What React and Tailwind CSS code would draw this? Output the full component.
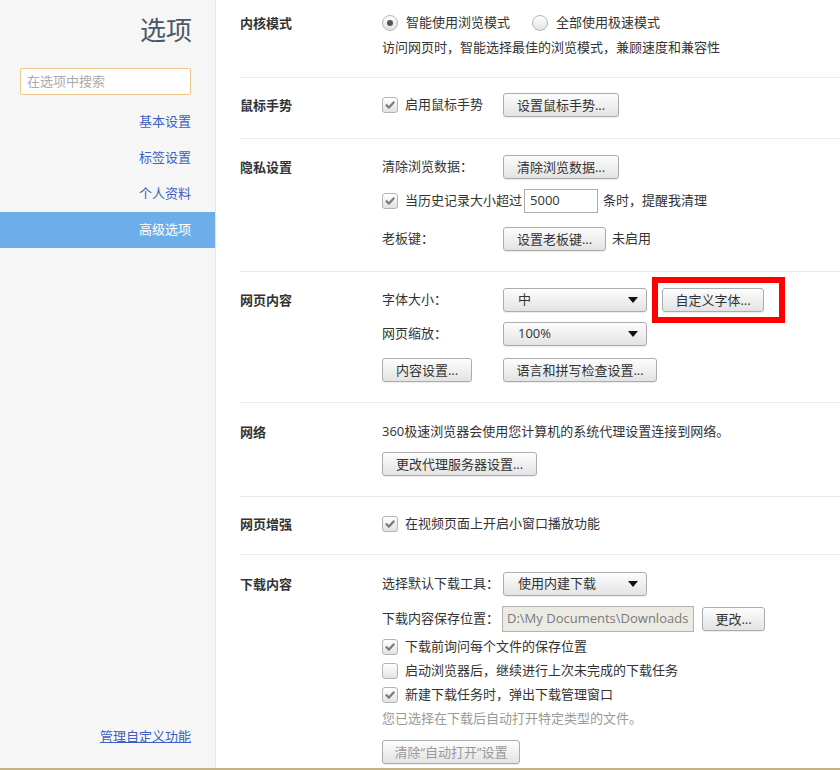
const font = { fontFamily: '"Open Sans", "Noto Sans CJK SC", sans-serif' }

function Check({ checked }) {
    return (
        <span className="w-[16px] h-[16px] shrink-0 rounded-[3px] border border-[#b5b5b5] bg-linear-to-b from-[#ffffff] to-[#e2e2e2] flex items-center justify-center">
            {checked && (
                <svg width="12" height="12" viewBox="0 0 12 12">
                    <path d="M2.5 6.2 L5 8.6 L9.6 3.4" fill="none" stroke="#7a7a7a" strokeWidth="2.2" strokeLinecap="round" strokeLinejoin="round" />
                </svg>
            )}
        </span>
    )
}

function Radio({ checked }) {
    return (
        <span className="w-[16px] h-[16px] shrink-0 rounded-full border border-[#b5b5b5] bg-linear-to-b from-[#ffffff] to-[#e2e2e2] flex items-center justify-center">
            {checked && <span className="w-[6px] h-[6px] rounded-full bg-[#555]" />}
        </span>
    )
}

function Button({ children, className = '', disabled }) {
    return (
        <button
            className={`h-[24px] shrink-0 border border-[#acacac] rounded-[3px] bg-linear-to-b from-[#fdfdfd] to-[#e3e3e3] text-[13px] leading-none shadow-[0_1px_1px_rgba(0,0,0,0.08)] ${disabled ? 'text-[#9a9a9a]' : 'text-[#333]'} ${className}`}
        >
            {children}
        </button>
    )
}

function Select({ value }) {
    return (
        <div className="w-[144px] h-[24px] shrink-0 border border-[#acacac] rounded-[3px] bg-linear-to-b from-[#fdfdfd] to-[#e3e3e3] shadow-[0_1px_1px_rgba(0,0,0,0.08)] flex items-center pl-[14px] pr-[8px] text-[13px] text-[#333]">
            <span className="flex-1">{value}</span>
            <svg width="10" height="6" viewBox="0 0 10 6">
                <path d="M0 0 H10 L5 6 Z" fill="#111" />
            </svg>
        </div>
    )
}

function Section({ label, children, className = '', first }) {
    return (
        <div className={`flex ${first ? '' : 'border-t border-[#ebebeb]'} ${className}`}>
            <div className="w-[142px] h-[24px] pt-[2px] shrink-0 flex items-center text-[13px] font-bold text-[#333]">{label}</div>
            <div className="flex-1 flex flex-col text-[13px] text-[#333]">{children}</div>
        </div>
    )
}

function Row({ children, className = '' }) {
    return <div className={`h-[24px] flex items-center ${className}`}>{children}</div>
}

export default function App() {
    const nav = ['基本设置', '标签设置', '个人资料', '高级选项']

    return (
        <div className="w-[840px] h-[770px] flex flex-col overflow-hidden bg-white" style={font}>
            <div className="flex-1 flex min-h-0">
                <aside className="w-[216px] shrink-0 bg-[#f6f6f6] border-r border-[#e6e6e6] flex flex-col">
                    <div className="h-[58px] pt-[12px] pr-[23px] text-right text-[26px] leading-[36px] text-[#4b5868]">选项</div>
                    <div className="pl-[20px] pr-[24px] mt-[10px]">
                        <div className="h-[27px] border border-[#ecc589] rounded-[2px] bg-white flex items-center px-[6px] text-[13px] text-[#aaa]">
                            在选项中搜索
                        </div>
                    </div>
                    <nav className="mt-[9px] flex flex-col">
                        {nav.map((n, i) => (
                            <div
                                key={n}
                                className={`h-[36px] flex items-center justify-end pr-[24px] text-[13px] ${i === 3 ? 'bg-[#6daeea] text-white' : 'text-[#3b5fc2]'}`}
                            >
                                {n}
                            </div>
                        ))}
                    </nav>
                    <div className="mt-auto pb-[22px] pr-[24px] text-right text-[13px] leading-[20px]">
                        <span className="text-[#3b5fc2] underline">管理自定义功能</span>
                    </div>
                </aside>

                <main className="flex-1 pl-[24px] flex flex-col">
                    <Section label="内核模式" first className="pt-[11px] pb-[17px]">
                        <Row>
                            <Radio checked />
                            <span className="ml-[8px]">智能使用浏览模式</span>
                            <span className="ml-[22px]"><Radio /></span>
                            <span className="ml-[8px]">全部使用极速模式</span>
                        </Row>
                        <Row className="mt-[1px]">访问网页时，智能选择最佳的浏览模式，兼顾速度和兼容性</Row>
                    </Section>

                    <Section label="鼠标手势" className="pt-[15px] pb-[21px]">
                        <Row>
                            <div className="w-[121px] flex items-center">
                                <Check checked />
                                <span className="ml-[7px]">启用鼠标手势</span>
                            </div>
                            <Button className="w-[116px]">设置鼠标手势...</Button>
                        </Row>
                    </Section>

                    <Section label="隐私设置" className="pt-[16px] pb-[20px]">
                        <Row>
                            <span className="w-[121px]">清除浏览数据：</span>
                            <Button className="w-[116px]">清除浏览数据...</Button>
                        </Row>
                        <Row className="mt-[10px]">
                            <Check checked />
                            <span className="ml-[7px]">当历史记录大小超过</span>
                            <div className="ml-[2px] w-[74px] h-[24px] border border-[#acacac] bg-white flex items-center px-[5px]">5000</div>
                            <span className="ml-[5px]">条时，提醒我清理</span>
                        </Row>
                        <Row className="mt-[14px]">
                            <span className="w-[121px]">老板键：</span>
                            <Button className="w-[103px]">设置老板键...</Button>
                            <span className="ml-[6px]">未启用</span>
                        </Row>
                    </Section>

                    <Section label="网页内容" className="pt-[16px] pb-[20px]">
                        <Row>
                            <span className="w-[121px]">字体大小：</span>
                            <Select value="中" />
                            <div className="relative ml-[15px]">
                                <Button className="w-[102px]">自定义字体...</Button>
                                <div className="absolute left-[-10px] right-[-21px] top-[-11px] bottom-[-11px] border-[6px] border-[#ff0000] pointer-events-none" />
                            </div>
                        </Row>
                        <Row className="mt-[10px]">
                            <span className="w-[121px]">网页缩放：</span>
                            <Select value="100%" />
                        </Row>
                        <Row className="mt-[12px]">
                            <div className="w-[121px]">
                                <Button className="w-[90px]">内容设置...</Button>
                            </div>
                            <Button className="w-[154px]">语言和拼写检查设置...</Button>
                        </Row>
                    </Section>

                    <Section label="网络" className="pt-[17px] pb-[20px]">
                        <Row>360极速浏览器会使用您计算机的系统代理设置连接到网络。</Row>
                        <Row className="mt-[8px]">
                            <Button className="w-[155px]">更改代理服务器设置...</Button>
                        </Row>
                    </Section>

                    <Section label="网页增强" className="pt-[15px] pb-[18px]">
                        <Row>
                            <Check checked />
                            <span className="ml-[7px]">在视频页面上开启小窗口播放功能</span>
                        </Row>
                    </Section>

                    <Section label="下载内容" className="pt-[17px]">
                        <Row>
                            <span className="w-[121px]">选择默认下载工具：</span>
                            <Select value="使用内建下载" />
                        </Row>
                        <div className="h-[26px] mt-[10px] flex items-center">
                            <span className="w-[120px]">下载内容保存位置：</span>
                            <div className="w-[192px] h-[26px] border border-[#b3b3b3] bg-[#ebebe4] flex items-center pl-[4px] text-[#7a7a7a] overflow-hidden whitespace-nowrap">
                                D:\My Documents\Downloads
                            </div>
                            <Button className="ml-[8px] w-[63px]">更改...</Button>
                        </div>
                        <Row className="mt-[3px]">
                            <Check checked />
                            <span className="ml-[7px]">下载前询问每个文件的保存位置</span>
                        </Row>
                        <Row>
                            <Check />
                            <span className="ml-[7px]">启动浏览器后，继续进行上次未完成的下载任务</span>
                        </Row>
                        <Row>
                            <Check checked />
                            <span className="ml-[7px]">新建下载任务时，弹出下载管理窗口</span>
                        </Row>
                        <Row className="text-[#9a9a9a]">您已选择在下载后自动打开特定类型的文件。</Row>
                        <Row className="mt-[9px]">
                            <Button disabled className="w-[138px]">清除“自动打开”设置</Button>
                        </Row>
                    </Section>
                </main>
            </div>
            <div className="h-[2px] shrink-0 bg-[#c5b385]" />
        </div>
    )
}
